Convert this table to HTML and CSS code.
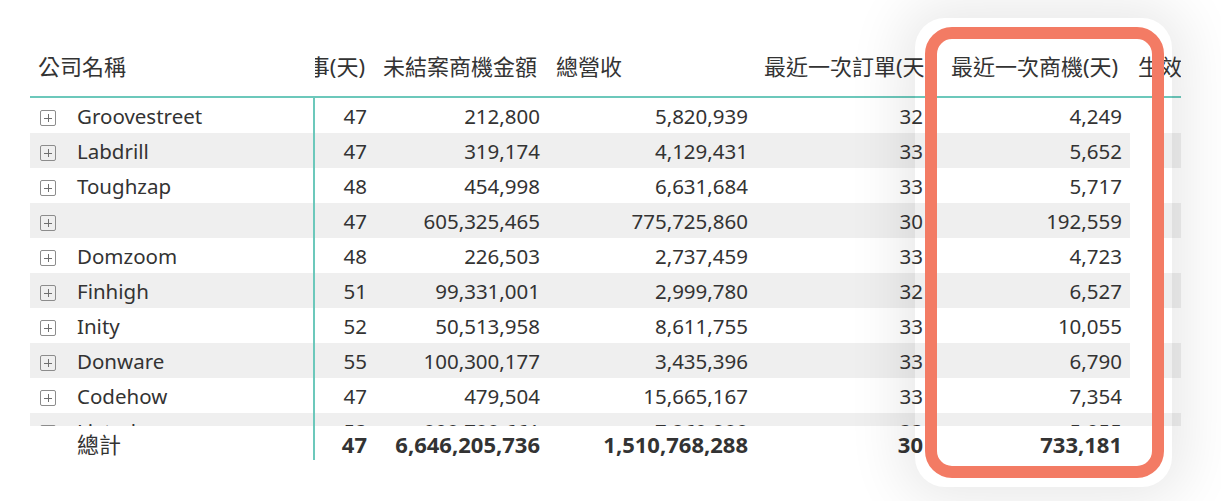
FILE: index.html
```html
<!DOCTYPE html>
<html lang="zh-Hant">
<head>
<meta charset="utf-8">
<title>Spotlight table</title>
<link rel="stylesheet" href="styles.css">
</head>
<body>
<div class="page">
  <div class="table">
    <div class="row head">
      <div class="c c1"><span>公司名稱</span></div>
      <div class="c c2 clip-left"><span>處理事(天)</span></div>
      <div class="c c3"><span>未結案商機金額</span></div>
      <div class="c c4"><span>總營收</span></div>
      <div class="c c5"><span>最近一次訂單(天)</span></div>
      <div class="c c6"><span>最近一次商機(天)</span></div>
      <div class="c c7"><span>生效日期</span></div>
    </div>
    <div class="body">
      <div class="row">
        <div class="c c1"><i class="exp"></i><span>Groovestreet</span></div>
        <div class="c c2 n">47</div><div class="c c3 n">212,800</div><div class="c c4 n">5,820,939</div><div class="c c5 n">32</div><div class="c c6 n">4,249</div><div class="c c7"></div>
      </div>
      <div class="row alt">
        <div class="c c1"><i class="exp"></i><span>Labdrill</span></div>
        <div class="c c2 n">47</div><div class="c c3 n">319,174</div><div class="c c4 n">4,129,431</div><div class="c c5 n">33</div><div class="c c6 n">5,652</div><div class="c c7"></div>
      </div>
      <div class="row">
        <div class="c c1"><i class="exp"></i><span>Toughzap</span></div>
        <div class="c c2 n">48</div><div class="c c3 n">454,998</div><div class="c c4 n">6,631,684</div><div class="c c5 n">33</div><div class="c c6 n">5,717</div><div class="c c7"></div>
      </div>
      <div class="row alt">
        <div class="c c1"><i class="exp"></i><span></span></div>
        <div class="c c2 n">47</div><div class="c c3 n">605,325,465</div><div class="c c4 n">775,725,860</div><div class="c c5 n">30</div><div class="c c6 n">192,559</div><div class="c c7"></div>
      </div>
      <div class="row">
        <div class="c c1"><i class="exp"></i><span>Domzoom</span></div>
        <div class="c c2 n">48</div><div class="c c3 n">226,503</div><div class="c c4 n">2,737,459</div><div class="c c5 n">33</div><div class="c c6 n">4,723</div><div class="c c7"></div>
      </div>
      <div class="row alt">
        <div class="c c1"><i class="exp"></i><span>Finhigh</span></div>
        <div class="c c2 n">51</div><div class="c c3 n">99,331,001</div><div class="c c4 n">2,999,780</div><div class="c c5 n">32</div><div class="c c6 n">6,527</div><div class="c c7"></div>
      </div>
      <div class="row">
        <div class="c c1"><i class="exp"></i><span>Inity</span></div>
        <div class="c c2 n">52</div><div class="c c3 n">50,513,958</div><div class="c c4 n">8,611,755</div><div class="c c5 n">33</div><div class="c c6 n">10,055</div><div class="c c7"></div>
      </div>
      <div class="row alt">
        <div class="c c1"><i class="exp"></i><span>Donware</span></div>
        <div class="c c2 n">55</div><div class="c c3 n">100,300,177</div><div class="c c4 n">3,435,396</div><div class="c c5 n">33</div><div class="c c6 n">6,790</div><div class="c c7"></div>
      </div>
      <div class="row">
        <div class="c c1"><i class="exp"></i><span>Codehow</span></div>
        <div class="c c2 n">47</div><div class="c c3 n">479,504</div><div class="c c4 n">15,665,167</div><div class="c c5 n">33</div><div class="c c6 n">7,354</div><div class="c c7"></div>
      </div>
      <div class="row alt cut">
        <div class="c c1"><i class="exp"></i><span>Lixtrak</span></div>
        <div class="c c2 n">53</div><div class="c c3 n">808,788,661</div><div class="c c4 n">7,269,288</div><div class="c c5 n">33</div><div class="c c6 n">5,055</div><div class="c c7"></div>
      </div>
    </div>
    <div class="row total">
      <div class="c c1"><span class="tlabel">總計</span></div>
      <div class="c c2 n">47</div><div class="c c3 n">6,646,205,736</div><div class="c c4 n">1,510,768,288</div><div class="c c5 n">30</div><div class="c c6 n">733,181</div><div class="c c7"></div>
    </div>
  </div>
  <div class="halo"></div>
  <div class="ring"></div>
</div>
</body>
</html>
```

FILE: styles.css
```css
* { box-sizing: border-box; }
html, body { margin: 0; padding: 0; background: #ffffff; }
body {
  font-family: "Noto Sans", "Noto Sans CJK TC", sans-serif;
  color: #333333;
  width: 1221px;
  height: 501px;
  overflow: hidden;
}
.page {
  position: relative;
  width: 1221px;
  height: 501px;
  padding: 30px 0 0 30px;
}
.table { width: 1151px; }
.row {
  display: flex;
  height: 35px;
  font-size: 20.5px;
  line-height: 1;
}
.row.alt { background: #efefef; }
.c {
  display: flex;
  align-items: center;
  overflow: hidden;
  white-space: nowrap;
  padding: 2px 8px 0;
}
.c.n { justify-content: flex-end; }
.c1 { width: 285px; padding-left: 10px; border-right: 2px solid #6cc8bb; }
.c2 { width: 60px; }
.c3 { width: 173px; }
.c4 { width: 208px; }
.c5 { width: 175px; }
.c6 { width: 199px; }
.c7 { width: 51px; }

.head {
  height: 68px;
  font-size: 22px;
  border-bottom: 2px solid #6cc8bb;
}
.head .c { padding-top: 6px; }
.head .c1 { border-right: none; padding-left: 8px; }
.head .c2 { justify-content: flex-end; padding-right: 10px; }
.head .c6 { padding-left: 20px; }

.body { height: 328px; overflow: hidden; }

.exp {
  width: 16px;
  height: 16px;
  border: 1px solid #8c8c8c;
  border-radius: 2px;
  position: relative;
  margin: 3px 21px 0 0;
  flex: none;
}
.exp::before, .exp::after {
  content: "";
  position: absolute;
  background: #6e6e6e;
}
.exp::before { left: 3px; right: 3px; top: 6.5px; height: 1px; }
.exp::after { top: 3px; bottom: 3px; left: 6.5px; width: 1px; }

.row.alt:not(.cut) .c7 {
  background: linear-gradient(to right, #ffffff 0 22px, #efefef 22px);
}

.total { height: 34px; font-weight: 700; font-size: 22px; }
.total .tlabel { font-weight: 400; font-size: 22px; margin-left: 37px; }

.halo {
  position: absolute;
  left: 915px;
  top: 18px;
  width: 257px;
  height: 469px;
  border-radius: 30px;
  box-shadow: 0 0 55px 14px rgba(0, 0, 0, 0.09);
}
.ring {
  position: absolute;
  left: 925px;
  top: 27px;
  width: 239px;
  height: 451px;
  border: 12px solid #f37b64;
  border-radius: 27px;
}
```
